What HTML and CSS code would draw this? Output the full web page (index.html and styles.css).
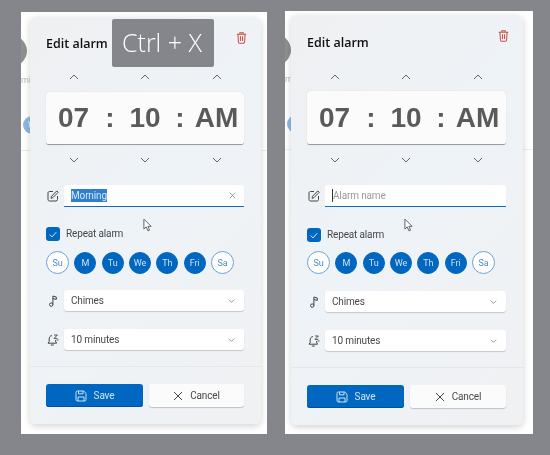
FILE: index.html
```html
<!DOCTYPE html>
<html lang="en">
<head>
    <meta charset="UTF-8">
    <meta name="viewport" content="width=device-width, initial-scale=1.0">
    <title>Edit alarm</title>
    <link rel="stylesheet" href="styles.css">
</head>
<body>
    <svg class="sprites" width="0" height="0">
        <symbol id="chev-up" viewBox="0 0 10 6"><path d="M1 5L5 1L9 5" fill="none" stroke="currentColor" stroke-width="1"/></symbol>
        <symbol id="chev-down" viewBox="0 0 10 6"><path d="M1 1L5 5L9 1" fill="none" stroke="currentColor" stroke-width="1"/></symbol>
        <symbol id="trash" viewBox="0 0 12 14"><path d="M.5 2.5h11M4 2.5V1h4v1.5M1.8 2.5l.6 9.2c0 .8.6 1.3 1.3 1.3h4.6c.7 0 1.3-.5 1.3-1.3l.6-9.2M4.8 5v5.5M7.2 5v5.5" fill="none" stroke="currentColor" stroke-width="1.2"/></symbol>
        <symbol id="edit" viewBox="0 0 12 12"><path d="M6 1.5H2.5C1.6 1.5 1 2.1 1 3v6.5c0 .9.6 1.5 1.5 1.5H9c.9 0 1.5-.6 1.5-1.5V6M4 8.3l.5-2L9.8.9l1.4 1.4L5.9 7.7z" fill="none" stroke="currentColor" stroke-width="1"/></symbol>
        <symbol id="note" viewBox="0 0 12 12"><circle cx="4.2" cy="9.6" r="1.7" fill="none" stroke="currentColor" stroke-width="1"/><path d="M5.9 9.6V1l3.4 1v2.4L5.9 3.5" fill="none" stroke="currentColor" stroke-width="1"/></symbol>
        <symbol id="snooze" viewBox="0 0 12 12"><path d="M5 1.6C3 1.8 2.2 3.2 2.2 5v2.4L1 9.2h8.6L8.6 7.4V6M3.8 11h3" fill="none" stroke="currentColor" stroke-width="1"/><path d="M7 1h3.4L7 4.4h3.4M9.6 6h2" fill="none" stroke="currentColor" stroke-width=".9"/></symbol>
        <symbol id="save" viewBox="0 0 12 12"><path d="M1 2.3C1 1.6 1.6 1 2.3 1h6.4L11 3.3v6.4c0 .7-.6 1.3-1.3 1.3H2.3C1.6 11 1 10.4 1 9.7zM3.5 1v2.8h4.5V1M3 11V7h6v4" fill="none" stroke="currentColor" stroke-width="1"/></symbol>
        <symbol id="cross" viewBox="0 0 10 10"><path d="M1 1L9 9M9 1L1 9" fill="none" stroke="currentColor" stroke-width="1"/></symbol>
        <symbol id="check" viewBox="0 0 10 8"><path d="M1 4.2L3.8 7L9 1.2" fill="none" stroke="currentColor" stroke-width="1.1"/></symbol>
        <symbol id="pointer" viewBox="0 0 10 15"><path d="M1 1V12L3.6 9.6L5.5 14L7.3 13.2L5.4 9H9z" fill="#fff" stroke="#555" stroke-width="1"/></symbol>
    </svg>

    <div class="shot shot-left">
        <div class="behind-avatar"></div>
        <div class="behind-label">mi</div>
        <div class="behind-day">W</div>
        <div class="behind-line"></div>

        <div class="card">
            <div class="card-body">
                <div class="card-header">
                    <h2>Edit alarm</h2>
                    <svg class="icon-trash"><use href="#trash"/></svg>
                </div>

                <div class="time-row time-up">
                    <svg class="chev"><use href="#chev-up"/></svg><i></i>
                    <svg class="chev"><use href="#chev-up"/></svg><i></i>
                    <svg class="chev"><use href="#chev-up"/></svg>
                </div>
                <div class="time-row time-box">
                    <span>07</span><span>:</span><span>10</span><span>:</span><span>AM</span>
                </div>
                <div class="time-row time-down">
                    <svg class="chev"><use href="#chev-down"/></svg><i></i>
                    <svg class="chev"><use href="#chev-down"/></svg><i></i>
                    <svg class="chev"><use href="#chev-down"/></svg>
                </div>

                <div class="field">
                    <svg class="field-icon"><use href="#edit"/></svg>
                    <div class="text-input">
                        <span class="selected">Morning</span>
                        <svg class="input-clear"><use href="#cross"/></svg>
                    </div>
                </div>

                <div class="repeat">
                    <span class="checkbox"><svg><use href="#check"/></svg></span>
                    <span>Repeat alarm</span>
                </div>

                <div class="days">
                    <span class="day">Su</span>
                    <span class="day on">M</span>
                    <span class="day on">Tu</span>
                    <span class="day on">We</span>
                    <span class="day on">Th</span>
                    <span class="day on">Fri</span>
                    <span class="day">Sa</span>
                </div>

                <div class="field field-sound">
                    <svg class="field-icon"><use href="#note"/></svg>
                    <div class="select"><span>Chimes</span><svg class="select-chev"><use href="#chev-down"/></svg></div>
                </div>
                <div class="field field-snooze">
                    <svg class="field-icon"><use href="#snooze"/></svg>
                    <div class="select"><span>10 minutes</span><svg class="select-chev"><use href="#chev-down"/></svg></div>
                </div>
            </div>

            <div class="card-footer">
                <button class="btn btn-primary"><svg><use href="#save"/></svg>Save</button>
                <button class="btn"><svg><use href="#cross"/></svg>Cancel</button>
            </div>
        </div>

        <div class="shortcut">Ctrl + X</div>
        <svg class="pointer"><use href="#pointer"/></svg>
    </div>

    <div class="shot shot-right">
        <div class="behind-avatar"></div>
        <div class="behind-label">mi</div>
        <div class="behind-day">W</div>
        <div class="behind-line"></div>

        <div class="card">
            <div class="card-body">
                <div class="card-header">
                    <h2>Edit alarm</h2>
                    <svg class="icon-trash"><use href="#trash"/></svg>
                </div>

                <div class="time-row time-up">
                    <svg class="chev"><use href="#chev-up"/></svg><i></i>
                    <svg class="chev"><use href="#chev-up"/></svg><i></i>
                    <svg class="chev"><use href="#chev-up"/></svg>
                </div>
                <div class="time-row time-box">
                    <span>07</span><span>:</span><span>10</span><span>:</span><span>AM</span>
                </div>
                <div class="time-row time-down">
                    <svg class="chev"><use href="#chev-down"/></svg><i></i>
                    <svg class="chev"><use href="#chev-down"/></svg><i></i>
                    <svg class="chev"><use href="#chev-down"/></svg>
                </div>

                <div class="field">
                    <svg class="field-icon"><use href="#edit"/></svg>
                    <div class="text-input">
                        <span class="placeholder">Alarm name</span>
                    </div>
                </div>

                <div class="repeat">
                    <span class="checkbox"><svg><use href="#check"/></svg></span>
                    <span>Repeat alarm</span>
                </div>

                <div class="days">
                    <span class="day">Su</span>
                    <span class="day on">M</span>
                    <span class="day on">Tu</span>
                    <span class="day on">We</span>
                    <span class="day on">Th</span>
                    <span class="day on">Fri</span>
                    <span class="day">Sa</span>
                </div>

                <div class="field field-sound">
                    <svg class="field-icon"><use href="#note"/></svg>
                    <div class="select"><span>Chimes</span><svg class="select-chev"><use href="#chev-down"/></svg></div>
                </div>
                <div class="field field-snooze">
                    <svg class="field-icon"><use href="#snooze"/></svg>
                    <div class="select"><span>10 minutes</span><svg class="select-chev"><use href="#chev-down"/></svg></div>
                </div>
            </div>

            <div class="card-footer">
                <button class="btn btn-primary"><svg><use href="#save"/></svg>Save</button>
                <button class="btn"><svg><use href="#cross"/></svg>Cancel</button>
            </div>
        </div>

        <svg class="pointer"><use href="#pointer"/></svg>
    </div>
</body>
</html>
```

FILE: styles.css
```css
body {
    margin: 0;
    height: 455px;
    overflow: hidden;
    background-color: #85868b;
    display: flex;
    align-items: flex-start;
    gap: 18px;
    padding-left: 21px;
    box-sizing: border-box;
    font-family: Roboto, "Noto Sans", sans-serif;
    font-size: 10px;
    letter-spacing: -0.15px;
    color: #484848;
}

.sprites {
    position: absolute;
}

.shot {
    position: relative;
    overflow: hidden;
    background-color: #fff;
    display: flex;
    flex-direction: column;
    box-sizing: border-box;
    filter: blur(0.4px);
}

.shot-left {
    width: 246px;
    height: 422px;
    margin-top: 12px;
    padding: 5px 6px 10px 9px;
}

.shot-right {
    width: 248px;
    height: 423px;
    margin-top: 11px;
    padding: 4px 10px 9px 6px;
}

/* bits of the alarm list showing from behind the dialog */
.behind-avatar {
    position: absolute;
    left: -28px;
    top: 23px;
    width: 34px;
    height: 32px;
    border-radius: 50%;
    background-color: #8f8f8f;
}

.behind-label {
    position: absolute;
    left: 0;
    top: 63px;
    color: #b9b9b9;
    font-size: 9px;
}

.behind-day {
    position: absolute;
    left: 2px;
    top: 104px;
    width: 18px;
    height: 18px;
    border-radius: 50%;
    background-color: #8db8e2;
    color: #fff;
    font-size: 9px;
    line-height: 18px;
    text-align: center;
}

.behind-line {
    position: absolute;
    left: 0;
    right: 0;
    top: 138px;
    border-top: 1px solid #ececec;
}

.card {
    position: relative;
    flex-grow: 1;
    display: flex;
    flex-direction: column;
    justify-content: space-between;
    background: linear-gradient(135deg, #eff0f2 0%, #eef3f7 45%, #f0f1f3 100%);
    border-radius: 6px;
    box-shadow: 0 2px 7px rgba(0, 0, 0, 0.18);
}

.card-body {
    padding: 0 17px 0 16px;
}

.card-header {
    height: 50px;
    display: flex;
    justify-content: space-between;
}

.card-header h2 {
    margin: 18px 0 0;
    font-family: "Open Sans", sans-serif;
    font-size: 12.5px;
    line-height: 18px;
    font-weight: 600;
    letter-spacing: 0;
    color: #111;
}

.icon-trash {
    width: 11px;
    height: 12px;
    margin: 15px -3px 0 0;
    color: #c8503f;
}

.shot-right .card-header {
    height: 52px;
}

.shot-right .card-header h2 {
    margin-top: 19px;
}

.time-row {
    display: grid;
    grid-template-columns: 55px 18px 52px 18px 55px;
    justify-items: center;
    align-items: center;
}

.time-up,
.time-down {
    height: 20px;
    color: #666;
}

.chev {
    width: 10px;
    height: 6px;
}

.time-box {
    height: 52px;
    margin: 5px 0;
    background-color: #fbfbfc;
    border-radius: 3px;
    border-bottom: 1px solid #9b9b9b;
    box-shadow: 0 0 1px rgba(0, 0, 0, 0.2);
    font-family: "Liberation Sans", Arial, sans-serif;
    font-size: 28px;
    font-weight: 700;
    letter-spacing: 0;
    color: #5a5a5a;
}

.shot-right .time-box {
    height: 53px;
    margin-top: 4px;
}

.field {
    display: flex;
    align-items: center;
    gap: 5px;
}

.field-icon {
    width: 12px;
    height: 12px;
    margin-left: 1px;
    flex-shrink: 0;
    color: #444;
}

.time-down + .field {
    margin-top: 15px;
}

.text-input {
    flex-grow: 1;
    height: 21px;
    padding: 0 7px;
    display: flex;
    align-items: center;
    justify-content: space-between;
    background-color: #fff;
    border-radius: 3px 3px 0 0;
    border-bottom: 1px solid #0f6fc6;
}

.selected {
    background-color: #2d7fd0;
    color: #d8e8f6;
    line-height: 13px;
}

.placeholder {
    border-left: 1px solid #333;
    color: #9b9b9b;
    line-height: 13px;
}

.input-clear {
    width: 7px;
    height: 7px;
    margin-right: 1px;
    color: #777;
}

.repeat {
    display: flex;
    align-items: center;
    gap: 6px;
    margin-top: 20px;
    line-height: 14px;
}

.shot-right .repeat {
    margin-top: 21px;
}

.checkbox {
    width: 14px;
    height: 14px;
    border-radius: 3px;
    background-color: #0067c0;
    color: #fff;
    display: flex;
    justify-content: center;
    align-items: center;
}

.checkbox svg {
    width: 8px;
    height: 7px;
}

.days {
    display: flex;
    justify-content: space-between;
    align-items: center;
    margin-top: 10px;
    width: 188px;
}

.shot-right .days {
    margin-top: 9px;
}

.day {
    width: 21px;
    height: 21px;
    border: 1px solid #6ba3d8;
    border-radius: 50%;
    background-color: #fff;
    color: #4a8ccb;
    font-size: 9px;
    display: flex;
    justify-content: center;
    align-items: center;
}

.day.on {
    width: 20px;
    height: 20px;
    background-color: #0067c0;
    border-color: #0067c0;
    color: #cfe2f4;
}

.select {
    flex-grow: 1;
    height: 21px;
    padding: 0 9px 0 7px;
    display: flex;
    align-items: center;
    justify-content: space-between;
    background-color: #fff;
    border-radius: 3px;
    box-shadow: 0 1px 1px rgba(0, 0, 0, 0.18);
}

.select-chev {
    width: 7px;
    height: 4px;
    color: #666;
}

.field-sound {
    margin-top: 16px;
}

.shot-right .field-sound {
    margin-top: 17px;
}

.field-snooze {
    margin-top: 18px;
}

.card-footer {
    display: flex;
    gap: 6px;
    padding: 17px 17px 17px 16px;
    border-top: 1px solid #e4e6e8;
}

.btn {
    flex: 1;
    height: 23px;
    padding: 0;
    border: none;
    border-radius: 3px;
    background-color: #fbfbfc;
    box-shadow: 0 1px 1px rgba(0, 0, 0, 0.2);
    font-family: inherit;
    font-size: 10px;
    letter-spacing: inherit;
    color: #484848;
    display: flex;
    justify-content: center;
    align-items: center;
    gap: 7px;
}

.btn svg {
    width: 10px;
    height: 10px;
}

.btn-primary {
    flex: 0 0 97px;
    background-color: #0067c0;
    box-shadow: inset 0 -1px 0 #00519a;
    color: #cfe2f4;
}

.btn-primary svg {
    width: 12px;
    height: 12px;
}

.shortcut {
    position: absolute;
    left: 91px;
    top: 7px;
    width: 100px;
    height: 48px;
    padding-right: 2px;
    border-radius: 2px;
    background-color: #85868b;
    color: #fff;
    font-family: "Open Sans", sans-serif;
    font-size: 25px;
    font-weight: 300;
    letter-spacing: 0;
    line-height: 47px;
    text-align: center;
}

.pointer {
    position: absolute;
    width: 9px;
    height: 14px;
}

.shot-left .pointer {
    left: 122px;
    top: 206px;
}

.shot-right .pointer {
    left: 119px;
    top: 207px;
}
```
